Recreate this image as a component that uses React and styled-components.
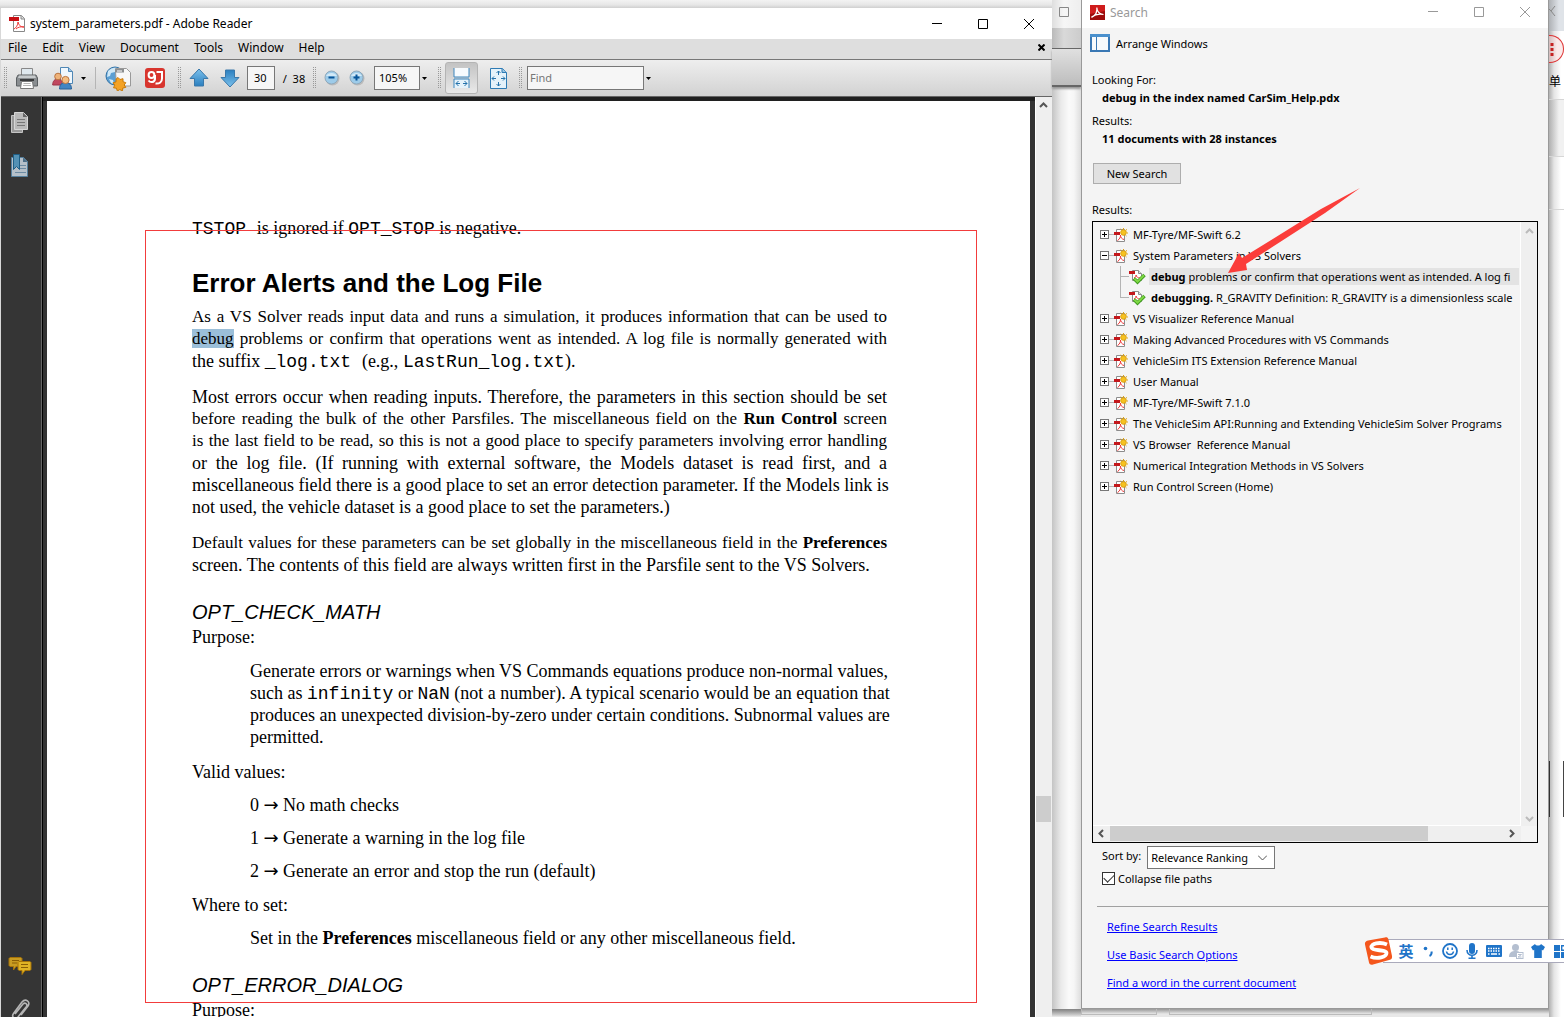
import React, { useState } from 'react';
import styled, { createGlobalStyle } from 'styled-components';

const ui = '"Noto Sans", "Open Sans", sans-serif';

const GlobalStyle = createGlobalStyle`
  * { box-sizing: border-box; }
  body {
    margin: 0;
    overflow: hidden;
    font-family: ${ui};
    font-size: 11px;
    color: #000;
  }
  button, input, select { font: inherit; color: inherit; }
  svg { display: block; flex: none; }
`;

const Desktop = styled.div`
  position: relative;
  display: grid;
  grid-template-columns: minmax(0, 1fr) 29px 468px 15px;
  height: 100vh;
  background: #fafafa;
`;

const PlainButton = styled.button`
  display: flex;
  align-items: center;
  justify-content: center;
  flex: none;
  padding: 0;
  border: 0;
  background: none;
`;

/* ---------- reader window ---------- */

const ReaderColumn = styled.div`
  display: flex;
  flex-direction: column;
  min-height: 0;
  padding: 8px 0 0 1px;
  background: linear-gradient(#f3f3f3, #e6e6e6 5px, #cfcfcf 8px, #d8d8d8 9px);
`;

const ReaderWindow = styled.main`
  display: flex;
  flex-direction: column;
  flex: 1;
  min-height: 0;
  background: #fff;
`;

const TitleBar = styled.header`
  display: flex;
  align-items: center;
  flex: none;
  height: ${(p) => p.$height}px;
  padding: 0 0 ${(p) => p.$lift || 0}px 8px;
  background: #fff;
  color: ${(p) => p.$color};
  font-size: 12px;
`;

const Title = styled.h1`
  flex: 1;
  margin: 0 0 0 5px;
  font-size: 12px;
  font-weight: 400;
`;

const WindowButton = styled(PlainButton)`
  width: 46px;
  height: 24px;
`;

const MenuBar = styled.nav`
  display: flex;
  align-items: center;
  flex: none;
  height: 21px;
  padding: 0 7px 3px;
  gap: 15px;
  background: #dedede;
  border-bottom: 1px solid #777;
`;

const MenuItem = styled(PlainButton)`
  font-size: 12px;
  line-height: 18px;
`;

const Spacer = styled.div`
  flex: 1;
`;

const Toolbar = styled.div`
  display: flex;
  align-items: center;
  flex: none;
  height: 37px;
  padding-left: 3px;
  background: linear-gradient(#eee, #d2d2d2);
  border-bottom: 1px solid #666;
`;

const Grip = styled.span`
  flex: none;
  width: 4px;
  height: 22px;
  margin-left: ${(p) => p.$gap || 0}px;
  background: conic-gradient(transparent 75%, #999 0) 0 0 / 2px 2px;
`;

const ToolButton = styled(PlainButton)`
  width: ${(p) => p.$width}px;
  height: 32px;
`;

const PressedTool = styled(ToolButton)`
  margin-left: 3px;
  border: 1px solid #b4b4b4;
  border-radius: 3px;
  background: linear-gradient(#c3c3c3, #e9e9e9);
`;

const Separator = styled.span`
  flex: none;
  width: 1px;
  height: 22px;
  margin: 0 8px 0 9px;
  background: #b5b5b5;
`;

const ToolInput = styled.input`
  flex: none;
  width: ${(p) => p.$width}px;
  height: 24px;
  margin-left: ${(p) => p.$gap}px;
  padding: 0 2px 1px ${(p) => p.$pad}px;
  border: 1px solid #777;
  border-radius: 0;
  background: #f6f6f6;
  &::placeholder { color: #777; opacity: 1; }
`;

const PageCount = styled.span`
  flex: none;
  width: 38px;
  text-align: center;
  white-space: pre;
`;

const ReaderBody = styled.div`
  display: flex;
  flex: 1;
  min-height: 0;
  overflow: hidden;
  background: #333;
`;

const SideRail = styled.aside`
  display: flex;
  flex-direction: column;
  align-items: center;
  flex: none;
  width: 42px;
  margin-bottom: -9px;
  padding: 9px 4px 0 0;
  gap: 12px;
  background: #353535;
  border-right: 1px solid #000;
  box-shadow: inset -1px 0 #666;
`;

const RailButton = styled(PlainButton)`
  width: 32px;
  height: 32px;
`;

const PageArea = styled.div`
  flex: 1;
  min-width: 0;
  padding: 4px 5px 0 4px;
  overflow: hidden;
  background: linear-gradient(#202020 4px, #333 4px);
`;

const Page = styled.article`
  position: relative;
  min-height: 100%;
  padding: 116px 143px 0 145px;
  background: #fff;
  font: 18px/22px "Liberation Serif", serif;
`;

const Paragraph = styled.p`
  margin: ${(p) => p.$gap}px 0 0 ${(p) => (p.$indent ? 58 : 0)}px;
`;

const Line = styled.span`
  display: block;
  height: 22px;
  font-size: ${(p) => (p.$tight ? 17 : 18)}px;
  text-align: justify;
  text-align-last: justify;
  white-space: nowrap;
  &:last-child { text-align-last: left; }
`;

const Heading = styled.h2`
  margin: 29px 0 0;
  font: bold 26px/30px "Liberation Sans", sans-serif;
`;

const TopicHeading = styled.h3`
  margin: 24px 0 2px;
  font: italic 20px/24px "Liberation Sans", sans-serif;
`;

const Code = styled.code`
  font: 18px/18px "Liberation Mono", monospace;
`;

const RightArrow = styled.span`
  font: 18px/18px "DejaVu Sans", sans-serif;
`;

const Hit = styled.mark`
  background: #9bbfd9;
  color: inherit;
`;

const RedFrame = styled.div`
  position: absolute;
  top: 129px;
  right: 53px;
  left: 98px;
  height: 773px;
  border: 1px solid #f23c3c;
  pointer-events: none;
`;

const PageScroll = styled.div`
  display: flex;
  flex-direction: column;
  flex: none;
  width: 17px;
  border-left: 1px solid #fff;
  background: #efefef;
`;

const ScrollCap = styled(PlainButton)`
  width: 15px;
  height: 17px;
`;

const ScrollThumb = styled.div`
  width: 15px;
  height: 26px;
  background: #cdcdcd;
`;

const ScrollTrack = styled.div`
  flex: ${(p) => p.$grow};
`;

/* ---------- strips of the windows behind ---------- */

const BackWindow = styled.div`
  display: flex;
  flex-direction: column;
  min-height: 0;
  background: linear-gradient(90deg, #c4c4c4, #eaeaea 9px, #fafafa 17px, #f6f6f6 22px, #ddd);
`;

const BackTitle = styled.div`
  height: 28px;
  padding: 7px 0 0 7px;
  background: linear-gradient(90deg, #dedede, #f6f6f6 12px, #eee);
`;

const BackMenu = styled.div`
  height: 21px;
  background: linear-gradient(90deg, #bababa, #d9d9d9 12px, #ccc);
  border-bottom: 1px solid #666;
`;

const BackToolbar = styled.div`
  height: 38px;
  background: linear-gradient(#e0e0e0, #bdbdbd);
  border-bottom: 2px solid #666;
  box-shadow: 0 2px 2px #999;
`;

const BackFooter = styled.div`
  height: 8px;
  margin-top: auto;
  background: linear-gradient(#8b8b8b, #ccc 5px, #eee);
  border-top: 1px solid #888;
`;

const BrowserStrip = styled.div`
  display: flex;
  flex-direction: column;
  overflow: hidden;
  background: linear-gradient(90deg, #b0b0b0, #e4e4e4 5px, #fff 12px);
`;

const StripTab = styled.div`
  height: 31px;
  padding-top: 5px;
  background: linear-gradient(90deg, #aeb1b5, #dfe3e8 10px);
`;

const MoreButton = styled(PlainButton)`
  width: 15px;
  height: 28px;
  margin-top: 4px;
  padding-right: 8px;
  border: 1px solid #d33;
  border-left: 0;
  border-radius: 0 14px 14px 0;
  background: linear-gradient(90deg, #d5bcbc, #fbeaea 8px);
`;

const StripText = styled.span`
  height: 36px;
  padding-top: 9px;
  font: 12px/18px "Noto Sans CJK SC", sans-serif;
`;

const StripBand = styled.div`
  height: ${(p) => p.$height}px;
  border-top: 1px solid #d6d6d6;
  background: ${(p) => (p.$grey ? 'linear-gradient(90deg, #b0b0b0, #f1f1f1 10px)' : 'none')};
`;

const StripDark = styled.div`
  height: 56px;
  margin: auto 0 200px;
  border-right: 1px solid #444;
  border-left: 1px solid #333;
`;

/* ---------- search window ---------- */

const SearchColumn = styled.div`
  position: relative;
  display: flex;
  flex-direction: column;
  min-width: 0;
  min-height: 0;
`;

const SearchWindow = styled.section`
  display: flex;
  flex-direction: column;
  flex: 1;
  min-height: 0;
  border: 1px solid #999;
  border-top: 0;
  background: #f4f4f4;
`;

const BottomStrip = styled.div`
  display: flex;
  height: 8px;
  gap: 12px;
  background: linear-gradient(#999, #e8e8e8 5px);
`;

const StripBox = styled.div`
  width: ${(p) => p.$width}px;
  height: 6px;
  border: 1px solid #bbb;
  border-top: 0;
`;

const ArrangeButton = styled(PlainButton)`
  align-self: flex-start;
  height: 20px;
  margin: 5px 0 0 8px;
  gap: 6px;
`;

const Summary = styled.dl`
  margin: 18px 0 0 10px;
  line-height: 18px;
`;

const Term = styled.dt`
  & ~ & { margin-top: 5px; }
`;

const Detail = styled.dd`
  margin: 0 0 0 10px;
  font-weight: 700;
`;

const NewSearch = styled.button`
  align-self: flex-start;
  width: 88px;
  height: 21px;
  margin: 15px 0 0 11px;
  padding: 0;
  border: 1px solid #adadad;
  background: #e1e1e1;
`;

const ListLabel = styled.h2`
  margin: 17px 0 2px 10px;
  font-size: 11px;
  font-weight: 400;
  line-height: 18px;
`;

const ResultsBox = styled.div`
  display: grid;
  flex: 1;
  grid-template-columns: minmax(0, 1fr) 16px;
  grid-template-rows: minmax(0, 1fr) 16px;
  min-height: 0;
  margin: 0 10px;
  border: 1px solid #000;
`;

const Tree = styled.ul`
  margin: 0;
  padding: 2px 1px 0 7px;
  overflow: hidden;
  list-style: none;
  border-right: 1px solid #fff;
  border-bottom: 1px solid #fff;
`;

const TreeItem = styled.li`
  display: flex;
  align-items: center;
  height: 21px;
  white-space: pre;
`;

const ToggleButton = styled(PlainButton)`
  width: 9px;
  height: 9px;
  border: 1px solid #777;
  background: #fff;
`;

const Connector = styled.span`
  flex: none;
  width: 5px;
  height: 1px;
  background: #b4b4b4;
`;

const ItemText = styled.span`
  margin-left: 5px;
`;

const ChildItem = styled(TreeItem)`
  padding-left: 20px;
`;

const Branch = styled.span`
  align-self: flex-start;
  flex: none;
  width: 9px;
  height: ${(p) => (p.$last ? 11 : 21)}px;
  border-left: 1px solid #b4b4b4;
  background: linear-gradient(#b4b4b4, #b4b4b4) 0 10px / 9px 1px no-repeat;
`;

const HitText = styled.span`
  flex: 1;
  min-width: 0;
  height: 17px;
  margin-left: 3px;
  padding-left: 2px;
  overflow: hidden;
  line-height: 17px;
  background: ${(p) => (p.$selected ? '#e3e3e3' : 'none')};
`;

const VerticalScroll = styled.div`
  display: flex;
  flex-direction: column;
  align-items: center;
  justify-content: space-between;
  padding: 5px 0 3px;
  background: #efefef;
`;

const HorizontalScroll = styled.div`
  display: flex;
  align-items: center;
  padding: 0 5px 1px 4px;
  background: #efefef;
`;

const HorizontalThumb = styled.div`
  flex: none;
  width: 76%;
  height: 15px;
  margin: 0 auto 0 4px;
  background: #cdcdcd;
`;

const SortRow = styled.div`
  display: flex;
  align-items: flex-start;
  margin: 3px 0 0 20px;
  line-height: 20px;
`;

const SelectBox = styled.span`
  display: grid;
  grid-template-columns: 1fr 16px;
  align-items: center;
  width: 128px;
  height: 23px;
  margin-left: 6px;
  border: 1px solid #777;
  background: #fff;
`;

const SortSelect = styled.select`
  grid-area: 1 / 1 / 2 / 3;
  height: 21px;
  padding: 0 3px;
  border: 0;
  background: none;
  appearance: none;
`;

const SelectArrow = styled.span`
  grid-area: 1 / 2;
  pointer-events: none;
`;

const CheckLabel = styled.label`
  display: flex;
  align-items: center;
  align-self: flex-start;
  height: 18px;
  margin: 0 0 19px 20px;
  gap: 3px;
`;

const Checkbox = styled.input`
  display: grid;
  place-items: center;
  width: 13px;
  height: 13px;
  margin: 0;
  border: 1px solid #333;
  background: #fff;
  appearance: none;
  &:checked::after {
    content: '';
    width: 9px;
    height: 5px;
    margin-bottom: 3px;
    border: solid #333;
    border-width: 0 0 1px 1px;
    transform: rotate(-45deg);
  }
`;

const LinkList = styled.div`
  display: flex;
  flex-direction: column;
  align-items: flex-start;
  margin-left: 15px;
  padding: 11px 0 16px 10px;
  gap: 10px;
  line-height: 18px;
  border-top: 1px solid #a0a0a0;
`;

const SearchLink = styled.a`
  color: #00f;
`;

const ArrowMark = styled.svg`
  position: absolute;
  top: 186px;
  left: 145px;
  pointer-events: none;
`;

/* ---------- input method bar ---------- */

const ImeBar = styled.div`
  position: absolute;
  right: 0;
  bottom: 52px;
  display: flex;
  align-items: center;
  width: 200px;
  height: 28px;
`;

const ImeTray = styled.div`
  display: flex;
  align-items: center;
  flex: 1;
  height: 24px;
  margin-left: -10px;
  padding-left: 12px;
  border: solid #aab;
  border-width: 1px 0;
  background: #fff;
  overflow: hidden;
`;

const ImeButton = styled(PlainButton)`
  width: 22px;
  height: 22px;
  color: ${(p) => (p.$muted ? '#b4bfd0' : '#1f74c8')};
  font: bold 15px/20px "Noto Sans CJK SC", sans-serif;
`;

const ImeLogo = styled.svg`
  z-index: 1;
`;

/* ---------- icons ---------- */

const PdfFileIcon = () => (
  <svg width="16" height="17" viewBox="0 0 16 17">
    <path d="M4.500.5h8l3 3v13h-11z" fill="#fff" stroke="#888" />
    <path d="M12 .5v3.500h3.500" fill="#ddd" stroke="#888" />
    <path d="M5 14c2-1 4-4 4-7 1 3 2 5 6 5-3-.6-6 0-8 2" fill="none" stroke="#e33" />
    <path d="M0 2h10v4H0z" fill="#c80f14" />
  </svg>
);

const AcrobatIcon = () => (
  <svg width="15" height="15" viewBox="0 0 15 15">
    <path d="M0 0h15v15H0z" fill="#9d0a0a" />
    <path d="M0 0h15v6L0 9z" fill="#cf1c1c" />
    <path d="M1.500 12.500c4-2 6-5.500 5.300-10M6.800 2.500c.2 3.500 2.700 6.500 6.700 7M1.500 12C5 9.500 9 8.500 13.500 9.500" fill="none" stroke="#fff" strokeWidth="1.200" />
  </svg>
);

const MinimizeIcon = () => (
  <svg width="10" height="10" viewBox="0 0 10 10"><path d="M0 4.500h10" stroke="currentColor" /></svg>
);

const MaximizeIcon = () => (
  <svg width="10" height="10" viewBox="0 0 10 10"><path d="M.5.5h9v9h-9z" fill="none" stroke="currentColor" /></svg>
);

const CloseIcon = () => (
  <svg width="10" height="10" viewBox="0 0 10 10"><path d="M0 0l10 10M10 0L0 10" stroke="currentColor" /></svg>
);

const ThickCloseIcon = () => (
  <svg width="7" height="7" viewBox="0 0 7 7"><path d="M.5.5l6 6M6.500.5l-6 6" stroke="#000" strokeWidth="2" /></svg>
);

const CaretIcon = () => (
  <svg width="5" height="3" viewBox="0 0 5 3"><path d="M0 0h5L2.500 3z" /></svg>
);

const ChevronIcon = ({ turn = 0, color = '#555', thin }) => (
  <svg width="9" height="9" viewBox="0 0 9 9">
    <path
      d={thin ? 'M0 6.500L4.500 2 9 6.500' : 'M1 6l3.500-3.500L8 6'}
      transform={`rotate(${turn} 4.500 4.500)`}
      fill="none"
      stroke={color}
      strokeWidth={thin ? 1 : 2}
    />
  </svg>
);

const PrinterIcon = () => (
  <svg width="22" height="23" viewBox="0 0 22 23">
    <path d="M5.500 1.500h11v7h-11z" fill="#dfe8ee" stroke="#888" />
    <path d="M2 8h18l1.500 3v8h-21v-8z" fill="#8a8e91" stroke="#5c6063" />
    <path d="M3 8.500h16l1 2.500H2z" fill="#c6cacc" />
    <path d="M4 12h14v2H4z" fill="#3a3c3e" />
    <path d="M5.500 14.500h11l1 7h-13z" fill="#fff" stroke="#777" />
    <path d="M7.500 16.500h7M7 18.500h8" stroke="#b5b5b5" />
  </svg>
);

const SharePeopleIcon = () => (
  <svg width="23" height="23" viewBox="0 0 23 23">
    <path d="M8.500.5h8l4 4v12h-12z" fill="#eff7fd" stroke="#4f87b5" />
    <path d="M16.500.5v4h4" fill="#9cc4e4" stroke="#4f87b5" />
    <path d="M.7 18c0-4 2-6 5-6s5 2 5 6z" fill="#c0475f" stroke="#9b3347" />
    <circle cx="6" cy="9.500" r="3.300" fill="#eeb279" stroke="#b9733f" />
    <path d="M7.500 22c0-4 2-6.500 6-6.500s6 2.500 6 6.500z" fill="#4285c2" stroke="#2a6198" />
    <circle cx="13.500" cy="13" r="3.600" fill="#f4bd80" stroke="#b9733f" />
  </svg>
);

const GlobeIcon = () => (
  <svg width="26" height="25" viewBox="0 0 26 25">
    <circle cx="10" cy="10" r="9" fill="#5b9fd3" stroke="#3473a6" />
    <path d="M3 5c3-3 6-4 9-3l-2 4-4 1-1 3-3 1zM4 13l4 1 1 4-3-1z" fill="#cfe8f7" />
    <path d="M10.500 5V2.500h11l4 4V20h-14z" fill="#f8f8f8" stroke="#999" />
    <path d="M10 3h9v3.500h-9z" fill="#8b8e90" />
    <path d="M12 5h5" stroke="#fff" />
    <path d="M13 11.500l2 2 3-.8v3l2.800 1-1.600 2.300 1.600 2.400-3 .6-.3 2.800-2.800-1.200-2.300 1.400-1-2.800-2.900-.4 1.200-2.600-1.600-2.500 2.900-.8.2-3z" fill="#f3a226" stroke="#c87908" />
  </svg>
);

const RedBadgeIcon = () => (
  <svg width="20" height="20" viewBox="0 0 20 20">
    <rect width="20" height="20" rx="3" fill="#d8352e" />
    <circle cx="6.500" cy="7" r="2.900" fill="none" stroke="#fff" strokeWidth="2" />
    <path d="M3.500 12.500c2 2.500 6 2 6.500-1.500V7M11.500 4h5.500v6.500c0 3.500-2.500 5.500-6.500 5" fill="none" stroke="#fff" strokeWidth="2" />
  </svg>
);

const PageArrowIcon = ({ down }) => (
  <svg width="20" height="20" viewBox="0 0 20 20">
    <defs>
      <linearGradient id="arrowFill" x1="0" y1="0" x2="0" y2="1">
        <stop offset="0" stopColor="#7cc1ec" />
        <stop offset="1" stopColor="#2b7fbf" />
      </linearGradient>
    </defs>
    <path
      d="M10 1l9 9.500h-4.500V18h-9v-7.500H1z"
      transform={down ? 'rotate(180 10 10)' : undefined}
      fill="url(#arrowFill)"
      stroke="#3a78aa"
    />
  </svg>
);

const ZoomStepIcon = ({ plus }) => (
  <svg width="16" height="16" viewBox="0 0 16 16">
    <circle cx="8.500" cy="8.500" r="7" fill="#bbb" />
    <circle cx="7.500" cy="7.500" r="6.500" fill="#9dcbe9" stroke="#8fa9bc" />
    <path d="M2 6c2-4 9-4 11 0z" fill="#d2e9f7" />
    <path d={plus ? 'M4.500 7.500h6M7.500 4.500v6' : 'M4.500 7.500h6'} stroke="#07559a" strokeWidth="2" />
  </svg>
);

const FitWidthIcon = () => (
  <svg width="17" height="20" viewBox="0 0 17 20">
    <path d="M1 0v9h15V0" fill="#f7fbfe" stroke="#3d86bd" />
    <path d="M1 20v-9h15v9" fill="#e5f2fa" stroke="#3d86bd" />
    <path d="M3 15.500h4m3 0h4M5.500 13L3 15.500 5.500 18M11.500 13l2.500 2.500-2.500 2.500" fill="none" stroke="#2472ab" />
  </svg>
);

const FitPageIcon = () => (
  <svg width="17" height="21" viewBox="0 0 17 21">
    <path d="M.5.5h12l4 4v16H.5z" fill="#e5f2fa" stroke="#2e7bb4" />
    <path d="M12 .5v4h4.500" fill="#9bc6e4" stroke="#2e7bb4" />
    <path d="M8.500 7V3M6.500 5l2-2 2 2M8.500 14v4M6.500 16l2 2 2-2M6 10.500H2M4 8.500l-2 2 2 2M11 10.500h4M13 8.500l2 2-2 2" fill="none" stroke="#2472ab" />
  </svg>
);

const PagesIcon = () => (
  <svg width="20" height="23" viewBox="0 0 20 23">
    <path d="M1.500 4.500h11v17h-11z" fill="#999" stroke="#c4c4c4" />
    <path d="M4.500 1.500h9l4 4v13h-13z" fill="#b9b9b9" stroke="#d6d6d6" />
    <path d="M13 1.500v4.500h4.500z" fill="#666" />
    <path d="M7 8.500h8M7 11.500h8M7 14.500h8" stroke="#777" />
  </svg>
);

const BookmarkIcon = () => (
  <svg width="20" height="24" viewBox="0 0 20 24">
    <path d="M1.500 3.500h12l4 4v15h-16z" fill="#b5c0c9" stroke="#55809e" />
    <path d="M13 3.500v4.500h4.500z" fill="#4b6d87" />
    <path d="M10 11.500h6M10 14.500h6M5 18.500h11" stroke="#6c8ba3" />
    <path d="M3.500.5h6v15l-3-3-3 3z" fill="#5391b5" stroke="#1e5e86" />
  </svg>
);

const CommentsIcon = () => (
  <svg width="24" height="20" viewBox="0 0 24 20">
    <path d="M2 1.500h11l1 1v7l-1 1H8L5.500 14v-3.500H2l-1-1v-7z" fill="#c99c22" stroke="#a67308" />
    <path d="M4 4.500h7M4 7h5" stroke="#8a5e05" />
    <path d="M11 5.500h11l1 1v7l-1 1h-5L14 18.500v-4h-3l-1-1v-7z" fill="#e0b325" stroke="#a67308" />
    <path d="M13 8.500h7M13 11.500h7" stroke="#8a5e05" />
  </svg>
);

const PaperclipIcon = () => (
  <svg width="22" height="24" viewBox="0 0 22 24">
    <path d="M6 16l8-10c2-2 5 0 3.500 2.500L9 19c-3 3-7 0-4.500-3.500L13 4c3.500-4 9-.5 6 4L12 17" fill="none" stroke="#b5b5b5" strokeWidth="1.600" />
  </svg>
);

const ArrangeIcon = () => (
  <svg width="20" height="18" viewBox="0 0 20 18">
    <path d="M1 1h18v16H1z" fill="#f7fafc" stroke="#3a78b4" strokeWidth="2" />
    <path d="M0 0h20v3H0z" fill="#4a90cd" />
    <path d="M6.500 3v14" stroke="#3a78b4" />
  </svg>
);

const IndexedPdfIcon = () => (
  <svg width="14" height="14" viewBox="0 0 14 14">
    <path d="M2.500 1.500h8v12h-8z" fill="#fff" stroke="#8c8c8c" />
    <path d="M3.500 12.500C6 11 6.500 9 6.500 7c0 2 1 4 3.500 4.500" fill="none" stroke="#e33" />
    <path d="M0 4h6v3H0z" fill="#c4171b" />
    <circle cx="9.500" cy="4.500" r="2.800" fill="#f6c220" stroke="#dca012" />
    <path d="M9.500 0v1M13 1.500l-1 .5M14 5h-1M12.500 8l-1-.7M6.500 1l1 .7" stroke="#dba31a" />
  </svg>
);

const HitIcon = () => (
  <svg width="17" height="16" viewBox="0 0 17 16">
    <path d="M3.500 1.500h6l3 3v7h-9z" fill="#fff" stroke="#8c8c8c" />
    <path d="M9.500 1.500v3h3" fill="#ddd" stroke="#8c8c8c" />
    <path d="M5 9c2-1 2-2 2-3 .5 2 2 3 4 3" fill="none" stroke="#e33" />
    <path d="M0 2h6v3H0z" fill="#c4171b" />
    <path d="M5 9.500l3.500 3.500 7-7" fill="none" stroke="#3d9a1c" strokeWidth="3.500" />
    <path d="M5.500 9.700l3 3 6.500-6.500" fill="none" stroke="#7fd845" strokeWidth="2" />
  </svg>
);

const SogouLogo = () => (
  <ImeLogo width="29" height="28" viewBox="0 0 29 28">
    <path d="M4 3.500L21 .4c2-.3 3 .3 3.500 2L28 19c.3 2-.3 3.200-2 3.700L9 27.500c-2 .5-3.500 0-4-2L1 7.500c-.5-2 .8-3.500 3-4z" fill="#f4561c" />
    <path d="M23 7.500C16 4.500 6.500 6.500 7.500 10.500s15 1.500 15 5.500-9 6.500-16 3.500" fill="none" stroke="#fff" strokeWidth="3.800" />
  </ImeLogo>
);

const SmileIcon = () => (
  <svg width="16" height="16" viewBox="0 0 16 16" fill="none" stroke="currentColor" strokeWidth="1.800">
    <circle cx="8" cy="8" r="7" />
    <path d="M4.500 8.500c.5 4 6.500 4 7 0M5.800 4.500v2.500M10.200 4.500v2.500" strokeWidth="1.500" />
  </svg>
);

const MicIcon = () => (
  <svg width="12" height="16" viewBox="0 0 12 16">
    <rect x="3" width="6" height="11" rx="3" fill="currentColor" />
    <path d="M1 7c0 7 10 7 10 0M6 12v3M2.500 15.200h7" fill="none" stroke="currentColor" strokeWidth="1.600" />
  </svg>
);

const KeyboardIcon = () => (
  <svg width="16" height="12" viewBox="0 0 16 12">
    <rect width="16" height="12" rx="1" fill="currentColor" />
    <path d="M2 3.500h12M2 6h12" stroke="#fff" strokeWidth="1.500" strokeDasharray="1.500 1" />
    <path d="M2 9h1.500M5 9h6M12.500 9H14" stroke="#fff" strokeWidth="1.500" />
  </svg>
);

const UserIcon = () => (
  <svg width="15" height="15" viewBox="0 0 15 15">
    <circle cx="6.500" cy="3.500" r="3.500" fill="currentColor" />
    <path d="M0 13c0-5 3-6 6.500-6S12 8 12 13z" fill="currentColor" />
    <rect x="7.500" y="8.500" width="6.500" height="6" fill="#fff" stroke="currentColor" />
    <path d="M9 10.500h3.500l-3.500 2.500h3.500" fill="none" stroke="currentColor" />
  </svg>
);

const ShirtIcon = () => (
  <svg width="14" height="14" viewBox="0 0 14 14">
    <path d="M4 0c1 2 5 2 6 0l4 3-2 3.500-1.200-.7V14H3.200V5.800L2 6.500 0 3z" fill="currentColor" />
  </svg>
);

const GridIcon = () => (
  <svg width="13" height="13" viewBox="0 0 13 13">
    <path d="M0 0h6v6H0zM0 7h6v6H0zM7 7h6v6H7z" fill="currentColor" />
    <path d="M7.700.7h4.600v4.600H7.700z" fill="none" stroke="currentColor" strokeWidth="1.400" />
  </svg>
);

const PunctuationIcon = () => (
  <svg width="11" height="11" viewBox="0 0 11 11">
    <circle cx="2.500" cy="2.500" r="1.800" fill="currentColor" />
    <path d="M6.500 10c1.500-.7 2.200-2 2.200-4.500" fill="none" stroke="currentColor" strokeWidth="2" />
  </svg>
);

const menus = ['File', 'Edit', 'View', 'Document', 'Tools', 'Window', 'Help'];

const documents = [
  { title: 'MF-Tyre/MF-Swift 6.2' },
  {
    title: 'System Parameters in VS Solvers',
    hits: [
      { word: 'debug', text: ' problems or confirm that operations went as intended. A log fi' },
      { word: 'debugging.', text: ' R_GRAVITY Definition: R_GRAVITY is a dimensionless scale' },
    ],
  },
  { title: 'VS Visualizer Reference Manual' },
  { title: 'Making Advanced Procedures with VS Commands' },
  { title: 'VehicleSim ITS Extension Reference Manual' },
  { title: 'User Manual' },
  { title: 'MF-Tyre/MF-Swift 7.1.0' },
  { title: 'The VehicleSim API:Running and Extending VehicleSim Solver Programs' },
  { title: 'VS Browser  Reference Manual' },
  { title: 'Numerical Integration Methods in VS Solvers' },
  { title: 'Run Control Screen (Home)' },
];

const WindowButtons = () => (
  <>
    <WindowButton aria-label="Minimize"><MinimizeIcon /></WindowButton>
    <WindowButton aria-label="Maximize"><MaximizeIcon /></WindowButton>
    <WindowButton aria-label="Close"><CloseIcon /></WindowButton>
  </>
);

const ReaderToolbar = () => (
  <Toolbar>
    <Grip />
    <ToolButton $width={38} aria-label="Print"><PrinterIcon /></ToolButton>
    <ToolButton $width={34} aria-label="Collaborate"><SharePeopleIcon /></ToolButton>
    <ToolButton $width={6} aria-label="Collaborate options"><CaretIcon /></ToolButton>
    <Separator />
    <ToolButton $width={28} aria-label="Create PDF"><GlobeIcon /></ToolButton>
    <ToolButton $width={46} aria-label="Translate"><RedBadgeIcon /></ToolButton>
    <Grip />
    <ToolButton $width={34} aria-label="Previous page"><PageArrowIcon /></ToolButton>
    <ToolButton $width={28} aria-label="Next page"><PageArrowIcon down /></ToolButton>
    <ToolInput $width={28} $gap={3} $pad={6} aria-label="Page" defaultValue="30" />
    <PageCount>/  38</PageCount>
    <Grip />
    <ToolButton $width={30} aria-label="Zoom out"><ZoomStepIcon /></ToolButton>
    <ToolButton $width={20} aria-label="Zoom in"><ZoomStepIcon plus /></ToolButton>
    <ToolInput $width={46} $gap={7} $pad={4} aria-label="Zoom" defaultValue="105%" />
    <ToolButton $width={9} aria-label="Zoom levels"><CaretIcon /></ToolButton>
    <Grip $gap={9} />
    <PressedTool $width={33} aria-label="Fit width"><FitWidthIcon /></PressedTool>
    <ToolButton $width={40} aria-label="Fit page"><FitPageIcon /></ToolButton>
    <Grip $gap={1} />
    <ToolInput $width={117} $gap={4} $pad={2} aria-label="Find" placeholder="Find" />
    <ToolButton $width={9} aria-label="Find options"><CaretIcon /></ToolButton>
  </Toolbar>
);

const DocumentPage = () => (
  <Page>
    <Paragraph $gap={0}>
      <Code>TSTOP </Code>is ignored if <Code>OPT_STOP</Code> is negative.
    </Paragraph>
    <Heading>Error Alerts and the Log File</Heading>
    <Paragraph $gap={8}>
      <Line $tight>As a VS Solver reads input data and runs a simulation, it produces information that can be used to</Line>
      <Line $tight><Hit>debug</Hit> problems or confirm that operations went as intended. A log file is normally generated with</Line>
      <Line>the suffix <Code>_log.txt </Code>(e.g., <Code>LastRun_log.txt</Code>).</Line>
    </Paragraph>
    <Paragraph $gap={14}>
      <Line>Most errors occur when reading inputs. Therefore, the parameters in this section should be set</Line>
      <Line $tight>before reading the bulk of the other Parsfiles. The miscellaneous field on the <b>Run Control</b> screen</Line>
      <Line $tight>is the last field to be read, so this is not a good place to specify parameters involving error handling</Line>
      <Line>or the log file. (If running with external software, the Models dataset is read first, and a</Line>
      <Line>miscellaneous field there is a good place to set an error detection parameter. If the Models link is</Line>
      <Line>not used, the vehicle dataset is a good place to set the parameters.)</Line>
    </Paragraph>
    <Paragraph $gap={14}>
      <Line $tight>Default values for these parameters can be set globally in the miscellaneous field in the <b>Preferences</b></Line>
      <Line>screen. The contents of this field are always written first in the Parsfile sent to the VS Solvers.</Line>
    </Paragraph>
    <TopicHeading>OPT_CHECK_MATH</TopicHeading>
    <Paragraph $gap={0}>Purpose:</Paragraph>
    <Paragraph $gap={12} $indent>
      <Line>Generate errors or warnings when VS Commands equations produce non-normal values,</Line>
      <Line>such as <Code>infinity</Code> or <Code>NaN</Code> (not a number). A typical scenario would be an equation that</Line>
      <Line>produces an unexpected division-by-zero under certain conditions. Subnormal values are</Line>
      <Line>permitted.</Line>
    </Paragraph>
    <Paragraph $gap={13}>Valid values:</Paragraph>
    <Paragraph $gap={11} $indent>0 <RightArrow>→</RightArrow> No math checks</Paragraph>
    <Paragraph $gap={11} $indent>1 <RightArrow>→</RightArrow> Generate a warning in the log file</Paragraph>
    <Paragraph $gap={11} $indent>2 <RightArrow>→</RightArrow> Generate an error and stop the run (default)</Paragraph>
    <Paragraph $gap={12}>Where to set:</Paragraph>
    <Paragraph $gap={11} $indent>
      Set in the <b>Preferences</b> miscellaneous field or any other miscellaneous field.
    </Paragraph>
    <TopicHeading>OPT_ERROR_DIALOG</TopicHeading>
    <Paragraph $gap={0}>Purpose:</Paragraph>
    <RedFrame />
  </Page>
);

const Reader = () => (
  <ReaderColumn>
    <ReaderWindow>
      <TitleBar $height={31} $color="#000">
        <PdfFileIcon />
        <Title>system_parameters.pdf - Adobe Reader</Title>
        <WindowButtons />
      </TitleBar>
      <MenuBar>
        {menus.map((name) => <MenuItem key={name}>{name}</MenuItem>)}
        <Spacer />
        <PlainButton aria-label="Close document"><ThickCloseIcon /></PlainButton>
      </MenuBar>
      <ReaderToolbar />
      <ReaderBody>
        <SideRail>
          <RailButton aria-label="Pages"><PagesIcon /></RailButton>
          <RailButton aria-label="Bookmarks"><BookmarkIcon /></RailButton>
          <Spacer />
          <RailButton aria-label="Comments"><CommentsIcon /></RailButton>
          <RailButton aria-label="Attachments"><PaperclipIcon /></RailButton>
        </SideRail>
        <PageArea><DocumentPage /></PageArea>
        <PageScroll>
          <ScrollCap aria-label="Scroll up"><ChevronIcon /></ScrollCap>
          <ScrollTrack $grow={683} />
          <ScrollThumb />
          <ScrollTrack $grow={195} />
        </PageScroll>
      </ReaderBody>
    </ReaderWindow>
  </ReaderColumn>
);

const ResultTree = () => {
  const [open, setOpen] = useState('System Parameters in VS Solvers');

  return (
    <Tree>
      {documents.map((doc) => (
        <React.Fragment key={doc.title}>
          <TreeItem>
            <ToggleButton
              aria-label={`Toggle ${doc.title}`}
              onClick={() => setOpen(open === doc.title ? '' : doc.title)}
            >
              <svg width="5" height="5" viewBox="0 0 5 5">
                <path d={open === doc.title ? 'M0 2.500h5' : 'M0 2.500h5M2.500 0v5'} stroke="#000" />
              </svg>
            </ToggleButton>
            <Connector />
            <IndexedPdfIcon />
            <ItemText>{doc.title}</ItemText>
          </TreeItem>
          {open === doc.title && doc.hits && doc.hits.map((hit, i) => (
            <ChildItem key={hit.word}>
              <Branch $last={i === doc.hits.length - 1} />
              <HitIcon />
              <HitText $selected={i === 0}><b>{hit.word}</b>{hit.text}</HitText>
            </ChildItem>
          ))}
        </React.Fragment>
      ))}
    </Tree>
  );
};

const Search = () => (
  <SearchColumn>
    <SearchWindow>
      <TitleBar $height={28} $lift={4} $color="#999">
        <AcrobatIcon />
        <Title>Search</Title>
        <WindowButtons />
      </TitleBar>
      <ArrangeButton><ArrangeIcon />Arrange Windows</ArrangeButton>
      <Summary>
        <Term>Looking For:</Term>
        <Detail>debug in the index named CarSim_Help.pdx</Detail>
        <Term>Results:</Term>
        <Detail>11 documents with 28 instances</Detail>
      </Summary>
      <NewSearch>New Search</NewSearch>
      <ListLabel>Results:</ListLabel>
      <ResultsBox>
        <ResultTree />
        <VerticalScroll>
          <ChevronIcon color="#bbb" />
          <ChevronIcon color="#bbb" turn={180} />
        </VerticalScroll>
        <HorizontalScroll>
          <ChevronIcon turn={-90} />
          <HorizontalThumb />
          <ChevronIcon turn={90} />
        </HorizontalScroll>
      </ResultsBox>
      <SortRow>
        <label htmlFor="sort">Sort by:</label>
        <SelectBox>
          <SortSelect id="sort" defaultValue="relevance">
            <option value="relevance">Relevance Ranking</option>
            <option value="date">Date Modified</option>
          </SortSelect>
          <SelectArrow><ChevronIcon thin turn={180} /></SelectArrow>
        </SelectBox>
      </SortRow>
      <CheckLabel><Checkbox type="checkbox" defaultChecked />Collapse file paths</CheckLabel>
      <LinkList>
        <SearchLink href="#refine">Refine Search Results</SearchLink>
        <SearchLink href="#basic">Use Basic Search Options</SearchLink>
        <SearchLink href="#find">Find a word in the current document</SearchLink>
      </LinkList>
    </SearchWindow>
    <BottomStrip>
      <StripBox $width={76} />
      <StripBox $width={203} />
    </BottomStrip>
    <ArrowMark width="136" height="90" viewBox="0 0 136 90">
      <path d="M2 87l11-20 3 5L95 23 134 2 99 27 20 78l1 6z" fill="#fb3d3a" />
    </ArrowMark>
  </SearchColumn>
);

const InputMethod = () => (
  <ImeBar>
    <SogouLogo />
    <ImeTray>
      <ImeButton>英</ImeButton>
      <ImeButton aria-label="Punctuation"><PunctuationIcon /></ImeButton>
      <ImeButton aria-label="Emoji"><SmileIcon /></ImeButton>
      <ImeButton aria-label="Voice"><MicIcon /></ImeButton>
      <ImeButton aria-label="Keyboard"><KeyboardIcon /></ImeButton>
      <ImeButton $muted aria-label="Account"><UserIcon /></ImeButton>
      <ImeButton aria-label="Skins"><ShirtIcon /></ImeButton>
      <ImeButton aria-label="Toolbox"><GridIcon /></ImeButton>
    </ImeTray>
  </ImeBar>
);

const App = () => (
  <>
    <GlobalStyle />
    <Desktop>
      <Reader />
      <BackWindow>
        <BackTitle>
          <svg width="10" height="10" viewBox="0 0 10 10"><path d="M.5.5h9v9h-9z" fill="none" stroke="#888" /></svg>
        </BackTitle>
        <BackMenu />
        <BackToolbar />
        <BackFooter />
      </BackWindow>
      <Search />
      <BrowserStrip>
        <StripTab>
          <svg width="7" height="12" viewBox="0 0 7 12"><path d="M0 4l2 2 4-5M2 6l4 5" fill="none" stroke="#888" /></svg>
        </StripTab>
        <MoreButton aria-label="More">
          <svg width="4" height="14" viewBox="0 0 4 14">
            <path d="M.5 1h3v3h-3zM.5 6h3v3h-3zM.5 11h3v3h-3z" fill="#c52222" />
          </svg>
        </MoreButton>
        <StripText>单</StripText>
        <StripBand $height={57} $grey />
        <StripBand $height={53} />
        <StripBand $height={1} />
        <StripDark />
      </BrowserStrip>
      <InputMethod />
    </Desktop>
  </>
);

export default App;
